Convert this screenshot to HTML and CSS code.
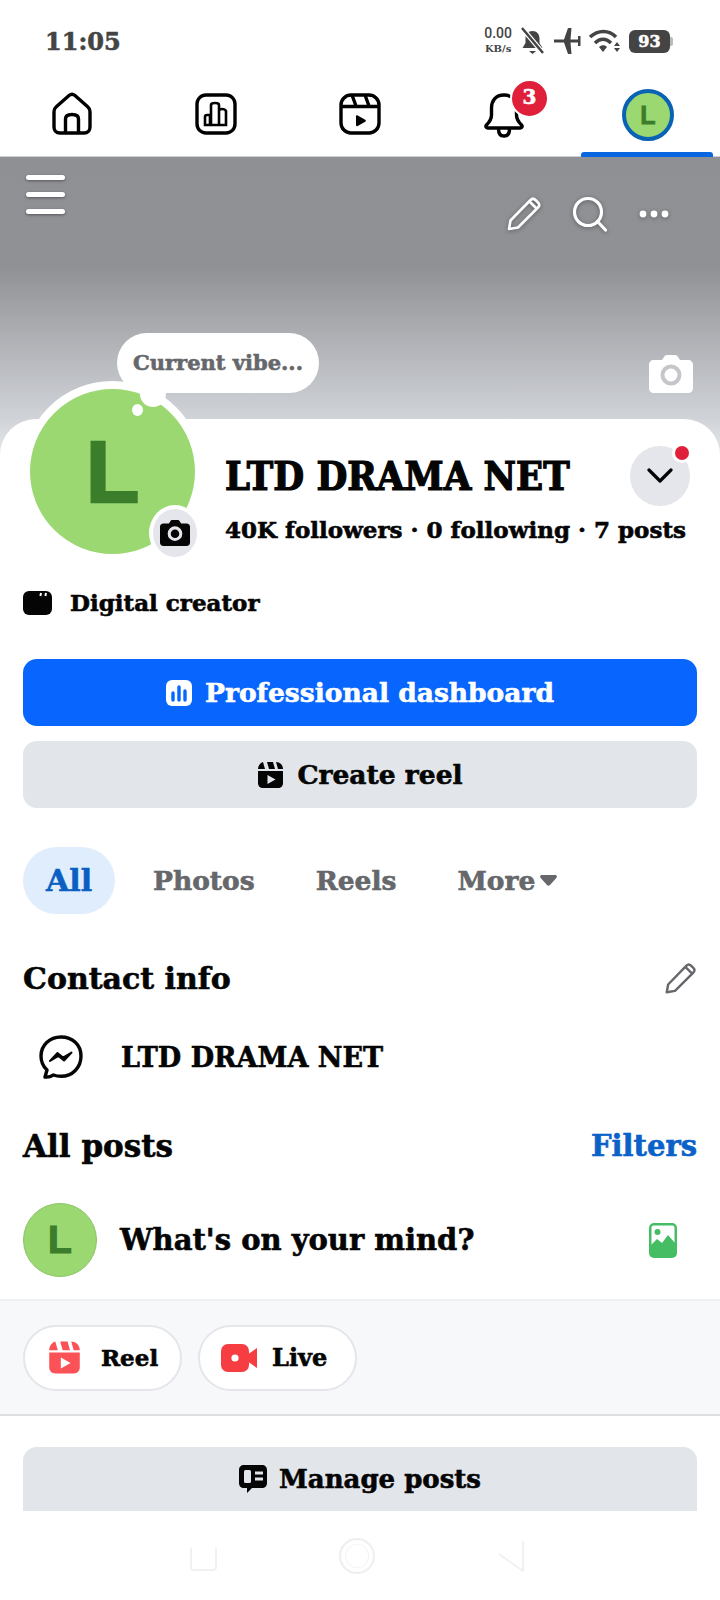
FILE: index.html
```html
<!DOCTYPE html>
<html lang="en">
<head>
    <meta charset="UTF-8">
    <meta name="viewport" content="width=device-width, initial-scale=1.0">
    <title>LTD DRAMA NET</title>
    <link rel="stylesheet" href="styles.css">
</head>
<body>
    <div class="phone">
        <div class="status">
            <span class="time">11:05</span>
            <div class="status-icons">
                <div class="speed"><span>0.00</span><span class="speed-unit">KB/s</span></div>
                <svg width="27" height="28" viewBox="0 0 27 28"><path d="M13.5 4c-4.500 0-7 3.400-7 7.500V16L3.500 21h20l-3-5v-4.500C20.500 7.400 18 4 13.500 4z" fill="#444"/><path d="M10 24h7l-3.500 3z" fill="#444"/><path d="M3 1l21 25" stroke="#fff" stroke-width="5"/><path d="M3 1l21 25" stroke="#444" stroke-width="2.500"/></svg>
                <svg width="28" height="28" viewBox="0 0 28 28"><path d="M1 12.500h10L15 1h3.500l-1 11.500H25V9h2.500v10H25v-3.500h-7.500l1 11.500H15l-4-11.500H1z" fill="#444"/></svg>
                <svg width="33" height="26" viewBox="0 0 33 26"><path d="M2 9c8-7.500 19-7.500 26 0M7 15c5-5 11-5 16 0" fill="none" stroke="#444" stroke-width="3.500"/><path d="M11 19c2.500-2.500 6-2.500 8 0l-4 5z" fill="#444"/><path d="M29 14l3 4h-6zM29 24l3-4h-6z" fill="#444"/></svg>
                <div class="battery"><span>93</span></div>
            </div>
        </div>

        <nav class="tabs">
            <div class="tab">
                <svg width="44" height="44" viewBox="0 0 44 44"><path d="M4 19.500c0-2 .8-3.500 2.300-4.800L19 3.500c1.800-1.500 4.200-1.500 6 0l12.700 11.200c1.500 1.300 2.300 2.800 2.300 4.800V35c0 3.500-2.200 6-6 6H10c-3.800 0-6-2.500-6-6z" fill="none" stroke="#000" stroke-width="3.400"/><path d="M15.500 41V27c0-3 2-4.500 6.500-4.500s6.500 1.500 6.500 4.500v14" fill="none" stroke="#000" stroke-width="3.400"/></svg>
            </div>
            <div class="tab">
                <svg width="44" height="44" viewBox="0 0 44 44"><rect x="3" y="3" width="38" height="38" rx="9" fill="none" stroke="#000" stroke-width="3.400"/><path d="M11 33V25q0-2 2-2t3 0V33zM17 33V13q0-2 4-2t4 2v20zM25 33V19q0-2 3-2t4 2v14zM10 33h23" fill="none" stroke="#000" stroke-width="2.600"/></svg>
            </div>
            <div class="tab">
                <svg width="44" height="44" viewBox="0 0 44 44"><rect x="3" y="3" width="38" height="38" rx="10" fill="none" stroke="#000" stroke-width="3.400"/><path d="M3 14.500h38M14 3l4 11M27 3l4 11" fill="none" stroke="#000" stroke-width="3.400"/><path d="M18 24.500c0-1 .8-1.500 1.700-1l7.500 4.300c.9.500.9 1.500 0 2l-7.500 4.300c-.9.500-1.700 0-1.700-1z" fill="#000"/></svg>
            </div>
            <div class="tab">
                <svg width="44" height="46" viewBox="0 0 44 46"><path d="M22 3c-8.500 0-12.500 6-12.500 13v7c0 4-2 7-5 10-1.200 1.300-.6 3 1.200 3h32.600c1.800 0 2.400-1.700 1.200-3-3-3-5-6-5-10v-7C34.500 9 30.500 3 22 3z" fill="none" stroke="#000" stroke-width="3.400"/><path d="M16.500 37c0 5 2.500 7 5.500 7s5.500-2 5.500-7" fill="none" stroke="#000" stroke-width="3.400"/></svg>
                <span class="badge">3</span>
            </div>
            <div class="tab tab-active">
                <div class="tab-avatar">L</div>
            </div>
        </nav>

        <div class="cover">
            <div class="cover-tools">
                <div class="burger"><span></span><span></span><span></span></div>
                <div class="cover-actions">
                    <svg class="shadow-icon" width="36" height="36" viewBox="0 0 36 36"><path d="M3 33l1.500-8.500L24.500 4c1.500-1.500 3.500-1.500 5 0l2.500 2.500c1.500 1.500 1.500 3.500 0 5L12 31.500zM23.500 5.500l7 7" fill="none" stroke="#fff" stroke-width="2.600" stroke-linejoin="round"/></svg>
                    <svg class="shadow-icon" width="36" height="36" viewBox="0 0 36 36"><circle cx="16" cy="16" r="13.500" fill="none" stroke="#fff" stroke-width="3.200"/><path d="M25.500 25.500l8 8.500" stroke="#fff" stroke-width="3.200" stroke-linecap="round"/></svg>
                    <svg class="shadow-icon" width="32" height="10" viewBox="0 0 32 10"><circle cx="5" cy="5" r="3.400" fill="#fff"/><circle cx="16" cy="5" r="3.400" fill="#fff"/><circle cx="27" cy="5" r="3.400" fill="#fff"/></svg>
                </div>
            </div>
            <svg class="cover-camera" width="44" height="38" viewBox="0 0 44 38"><path d="M5 5h8l2-3c.6-1.200 1.500-2 3-2h8c1.500 0 2.400.8 3 2l2 3h8c3 0 5 2 5 5v23c0 3-2 5-5 5H5c-3 0-5-2-5-5V10c0-3 2-5 5-5z" fill="#fff"/><circle cx="22" cy="20" r="8.500" fill="none" stroke="#c4c6ca" stroke-width="4"/></svg>
            <div class="bubble">Current vibe...</div>
        </div>

        <main class="sheet">
            <div class="avatar-wrap">
                <div class="avatar">L</div>
                <span class="bubble-tail"></span>
                <span class="bubble-dot"></span>
                <div class="avatar-camera">
                    <svg width="30" height="26" viewBox="0 0 44 38"><path d="M5 5h8l2-3c.6-1.200 1.500-2 3-2h8c1.500 0 2.400.8 3 2l2 3h8c3 0 5 2 5 5v23c0 3-2 5-5 5H5c-3 0-5-2-5-5V10c0-3 2-5 5-5z" fill="#050505"/><circle cx="22" cy="20" r="8.500" fill="none" stroke="#e4e6eb" stroke-width="4.500"/></svg>
                </div>
            </div>

            <div class="head">
                <div class="head-top">
                    <h1 class="name">LTD DRAMA NET</h1>
                    <div class="chevron">
                        <svg width="26" height="16" viewBox="0 0 26 16"><path d="M2 2l11 11L24 2" fill="none" stroke="#050505" stroke-width="3.200" stroke-linecap="round" stroke-linejoin="round"/></svg>
                        <span class="chevron-dot"></span>
                    </div>
                </div>
                <div class="stats">40K followers · 0 following · 7 posts</div>
            </div>

            <div class="role">
                <svg width="29" height="24" viewBox="0 0 29 24"><rect width="29" height="24" rx="6" fill="#050505"/><path d="M18 2l-.6 3M23 2l-.6 3" stroke="#fff" stroke-width="2"/></svg>
                <span>Digital creator</span>
            </div>

            <div class="actions">
                <div class="btn btn-primary">
                    <svg width="26" height="26" viewBox="0 0 26 26"><rect width="26" height="26" rx="6" fill="#fff"/><path d="M7 20v-7M13 20V7M19 20v-9" stroke="#0866ff" stroke-width="3.400" stroke-linecap="round"/></svg>
                    <span>Professional dashboard</span>
                </div>
                <div class="btn">
                    <svg width="27" height="26" viewBox="0 0 27 26"><path d="M1 9h25v12c0 3-2 5-5 5H6c-3 0-5-2-5-5z" fill="#050505"/><path d="M1 7c0-3 2-6 5-7l2 7zM10 0h6l2 7h-6zM19 0c4 0 7 3 7 7h-5z" fill="#050505"/><path d="M10.500 13v9l8-4.500z" fill="#e2e5ea"/></svg>
                    <span>Create reel</span>
                </div>
            </div>

            <div class="filters">
                <span class="pill-active">All</span>
                <span class="filter f-photos">Photos</span>
                <span class="filter f-reels">Reels</span>
                <span class="filter f-more">More<svg width="17" height="11" viewBox="0 0 17 11"><path d="M2 0h13c1.800 0 2.500 1.600 1.300 2.900L10 10c-.9 1-2.100 1-3 0L.7 2.900C-.5 1.600.2 0 2 0z" fill="#65676b"/></svg></span>
            </div>

            <div class="section-head contact-head">
                <h2>Contact info</h2>
                <svg width="33" height="33" viewBox="0 0 36 36"><path d="M3 33l1.500-8.500L24.500 4c1.500-1.500 3.500-1.500 5 0l2.500 2.500c1.500 1.500 1.500 3.500 0 5L12 31.500zM23.500 5.500l7 7" fill="none" stroke="#65676b" stroke-width="2.600" stroke-linejoin="round"/></svg>
            </div>

            <div class="contact-row">
                <svg width="44" height="44" viewBox="0 0 44 44"><path d="M22 2C10.500 2 2 10.500 2 21c0 5.500 2.200 10.500 6 14l-2 7c3 .4 6-.5 8.500-2 2.300.9 4.800 1.300 7.500 1.300 11.500 0 20-8.800 20-20.300S33.500 2 22 2z" fill="none" stroke="#050505" stroke-width="3.400" stroke-linejoin="round"/><path d="M11 26l7.500-8 5.500 4.500 8.500-5-7.500 8-5.500-4.500z" fill="#050505" stroke="#050505" stroke-width="2" stroke-linejoin="round"/></svg>
                <span>LTD DRAMA NET</span>
            </div>

            <div class="section-head posts-head">
                <h2 class="posts-title">All posts</h2>
                <span class="link">Filters</span>
            </div>

            <div class="composer">
                <div class="mini-avatar">L</div>
                <span class="composer-text">What's on your mind?</span>
                <svg width="28" height="35" viewBox="0 0 28 35"><rect width="28" height="35" rx="5" fill="#45bd62"/><rect x="2.500" y="2.500" width="23" height="22" rx="2" fill="#fff"/><circle cx="8.500" cy="9" r="3" fill="#45bd62"/><path d="M2 22l6-6 5 4 6-8 7 8v6H2z" fill="#45bd62"/></svg>
            </div>

            <div class="quick">
                <div class="quick-pill">
                    <svg width="33" height="33" viewBox="0 0 27 26"><path d="M1 9h25v12c0 3-2 5-5 5H6c-3 0-5-2-5-5z" fill="#fb5257"/><path d="M1 7c0-3 2-6 5-7l2 7zM10 0h6l2 7h-6zM19 0c4 0 7 3 7 7h-5z" fill="#fb5257"/><path d="M10.500 13v9l8-4.500z" fill="#fff"/></svg>
                    <span>Reel</span>
                </div>
                <div class="quick-pill quick-live">
                    <svg width="36" height="28" viewBox="0 0 36 28"><rect width="28" height="28" rx="7" fill="#f63d42"/><path d="M26 11l10-7v20l-10-7z" fill="#f63d42"/><circle cx="14" cy="14" r="3.600" fill="#fff"/></svg>
                    <span>Live</span>
                </div>
            </div>

            <div class="manage-wrap">
                <div class="btn btn-manage">
                    <svg width="28" height="28" viewBox="0 0 28 28"><path d="M5 0h18c3 0 5 2 5 5v13c0 3-2 5-5 5H13l-5 5v-5H5c-3 0-5-2-5-5V5c0-3 2-5 5-5z" fill="#050505"/><rect x="5" y="5" width="7" height="13" rx="1.500" fill="#e2e5ea"/><path d="M16 8h8M16 14h8" stroke="#e2e5ea" stroke-width="3"/></svg>
                    <span>Manage posts</span>
                </div>
            </div>
        </main>

        <div class="navbar">
            <span class="nav-square"></span>
            <span class="nav-circle"></span>
            <svg width="28" height="32" viewBox="0 0 28 32"><path d="M26 1v30L2 14" fill="none" stroke="#f1f1f2" stroke-width="2"/></svg>
        </div>
    </div>
</body>
</html>
```

FILE: styles.css
```css
* {
    margin: 0;
    padding: 0;
    box-sizing: border-box;
}

body {
    font-family: "DejaVu Serif", "Liberation Serif", serif;
    font-weight: 700;
    -webkit-text-stroke: 0.6px currentColor;
    background-color: #fff;
    color: #050505;
}

svg {
    display: block;
    flex-shrink: 0;
}

.phone {
    position: relative;
    width: 720px;
    height: 1600px;
    overflow: hidden;
    display: flex;
    flex-direction: column;
}

/* status bar */
.status {
    height: 68px;
    padding: 14px 50px 0 45px;
    display: flex;
    justify-content: space-between;
    align-items: center;
    color: #444;
}

.time {
    font-size: 24px;
}

.status-icons {
    display: flex;
    align-items: center;
    gap: 7px;
}

.speed {
    display: flex;
    flex-direction: column;
    align-items: center;
    font-family: "Roboto", sans-serif;
    font-size: 14px;
    font-weight: 500;
    line-height: 15px;
    -webkit-text-stroke: 0;
}

.speed-unit {
    font-family: "DejaVu Serif", serif;
    font-size: 10px;
    font-weight: 700;
}

.battery {
    position: relative;
    width: 41px;
    height: 23px;
    margin-left: 1px;
    background-color: #444;
    border-radius: 6px;
    color: #fff;
    font-size: 16px;
    line-height: 23px;
    text-align: center;
}

.battery::after {
    content: "";
    position: absolute;
    right: -3px;
    top: 7px;
    width: 3px;
    height: 9px;
    border-radius: 0 2px 2px 0;
    background-color: #bbb;
}

/* top tabs */
.tabs {
    height: 89px;
    padding-bottom: 1px;
    display: flex;
    border-bottom: 1px solid #cfd0d3;
}

.tab {
    position: relative;
    flex: 1;
    display: flex;
    justify-content: center;
    padding-top: 24px;
}

.tab-active::after {
    content: "";
    position: absolute;
    left: 5px;
    right: 7px;
    bottom: -2px;
    height: 5px;
    background-color: #0866e0;
    border-radius: 3px 3px 0 0;
}

.badge {
    position: absolute;
    left: 78px;
    top: 11px;
    width: 39px;
    height: 39px;
    border-radius: 50%;
    border: 2px solid #fff;
    background-color: #e0203a;
    color: #fff;
    font-size: 20px;
    line-height: 33px;
    text-align: center;
}

.tab-avatar {
    width: 52px;
    height: 52px;
    margin-top: -3px;
    border-radius: 50%;
    border: 4px solid #0a62b4;
    background-color: #9bd872;
    color: #3b7d2a;
    font-family: "Liberation Sans", sans-serif;
    font-size: 25px;
    line-height: 44px;
    text-align: center;
    -webkit-text-stroke: 0.8px #3b7d2a;
}

/* cover */
.cover {
    position: relative;
    height: 300px;
    flex-shrink: 0;
    background: linear-gradient(#8f9094 0, #909195 110px, #d0d3d8 262px, #e6e8eb 300px);
}

.cover-tools {
    display: flex;
    justify-content: space-between;
    padding: 18px 50px 0 26px;
}

.burger {
    display: flex;
    flex-direction: column;
    gap: 12px;
}

.burger span {
    display: block;
    width: 39px;
    height: 5px;
    border-radius: 3px;
    background-color: #fff;
    box-shadow: 0 1px 3px rgba(0, 0, 0, 0.4);
}

.cover-actions {
    display: flex;
    align-items: center;
    gap: 30px;
    margin-top: 21px;
}

.shadow-icon {
    filter: drop-shadow(0 1px 2px rgba(0, 0, 0, 0.35));
}

.cover-camera {
    position: absolute;
    left: 649px;
    top: 198px;
}

.bubble {
    position: absolute;
    left: 117px;
    top: 176px;
    width: 202px;
    height: 60px;
    border-radius: 30px;
    background-color: #fff;
    color: #65676b;
    font-size: 21px;
    line-height: 60px;
    text-align: center;
    z-index: 3;
}

/* profile sheet */
.sheet {
    position: relative;
    flex: 1;
    margin-top: -38px;
    background-color: #fff;
    border-radius: 36px 36px 0 0;
}

.avatar-wrap {
    position: absolute;
    left: 22px;
    top: -38px;
    width: 181px;
    height: 181px;
}

.avatar {
    width: 181px;
    height: 181px;
    border-radius: 50%;
    border: 8px solid #fff;
    background-color: #9bd872;
    color: #3b7d2a;
    font-family: "Liberation Sans", sans-serif;
    font-size: 87px;
    line-height: 165px;
    text-align: center;
    -webkit-text-stroke: 2.5px #3b7d2a;
}

.bubble-tail {
    position: absolute;
    left: 118px;
    top: 0;
    width: 26px;
    height: 26px;
    border-radius: 50%;
    background-color: #fff;
    z-index: 4;
}

.bubble-dot {
    position: absolute;
    left: 110px;
    top: 23px;
    width: 11px;
    height: 12px;
    border-radius: 50%;
    background-color: #fff;
}

.avatar-camera {
    position: absolute;
    left: 127px;
    top: 124px;
    width: 52px;
    height: 56px;
    border-radius: 50%;
    border: 4px solid #fff;
    background-color: #e4e6eb;
    display: flex;
    justify-content: center;
    align-items: center;
}

.head {
    padding: 27px 30px 0 225px;
}

.head-top {
    display: flex;
    justify-content: space-between;
    align-items: center;
}

.name {
    font-size: 39.5px;
    font-stretch: condensed;
    line-height: 60px;
    font-weight: 700;
    white-space: nowrap;
    -webkit-text-stroke: 1.2px #050505;
}

.chevron {
    position: relative;
    width: 60px;
    height: 60px;
    border-radius: 50%;
    background-color: #e4e6eb;
    display: flex;
    justify-content: center;
    align-items: center;
}

.chevron-dot {
    position: absolute;
    right: -2px;
    top: -3px;
    width: 20px;
    height: 20px;
    border-radius: 50%;
    border: 3px solid #fff;
    background-color: #e0203a;
}

.stats {
    margin-top: 10px;
    margin-right: -20px;
    font-size: 23px;
    line-height: 28px;
    white-space: nowrap;
}

.role {
    margin-top: 45px;
    padding-left: 23px;
    display: flex;
    align-items: center;
    gap: 18px;
    font-size: 23px;
    line-height: 28px;
}

.actions {
    margin-top: 42px;
    padding: 0 23px;
    display: flex;
    flex-direction: column;
    gap: 15px;
}

.btn {
    height: 67px;
    border-radius: 14px;
    background-color: #e2e5ea;
    display: flex;
    justify-content: center;
    align-items: center;
    gap: 13px;
    font-size: 26.5px;
}

.btn-primary {
    background-color: #0866ff;
    color: #fff;
}

.filters {
    margin-top: 39px;
    padding-left: 23px;
    height: 67px;
    display: flex;
    align-items: center;
    font-size: 26.5px;
    color: #65676b;
}

.pill-active {
    width: 92px;
    height: 67px;
    border-radius: 34px;
    background-color: #dfedfd;
    color: #0a5fc2;
    font-size: 30px;
    line-height: 67px;
    text-align: center;
}

.filter {
    display: flex;
    align-items: center;
    gap: 5px;
}

.f-photos {
    margin-left: 38px;
}

.f-reels {
    margin-left: 61px;
}

.f-more {
    margin-left: 61px;
}

.section-head {
    padding: 0 23px;
    display: flex;
    justify-content: space-between;
    align-items: center;
}

.section-head h2 {
    font-size: 30px;
    font-weight: 700;
}

.section-head .posts-title {
    font-size: 31px;
}

.contact-head {
    margin-top: 44px;
    height: 40px;
}

.contact-row {
    margin-top: 37px;
    padding-left: 39px;
    display: flex;
    align-items: center;
    gap: 38px;
    font-size: 27px;
    height: 44px;
}

.posts-head {
    margin-top: 47px;
    height: 40px;
}

.link {
    color: #0a62c8;
    font-size: 29px;
}

.composer {
    margin-top: 37px;
    height: 98px;
    padding: 0 43px 22px 23px;
    display: flex;
    align-items: center;
    border-bottom: 2px solid #eeeff1;
}

.mini-avatar {
    width: 74px;
    height: 74px;
    border-radius: 50%;
    border: 1px solid #8cc466;
    background-color: #9bd872;
    color: #3b7d2a;
    font-family: "Liberation Sans", sans-serif;
    font-size: 39px;
    line-height: 72px;
    text-align: center;
    -webkit-text-stroke: 1.2px #3b7d2a;
}

.composer-text {
    flex: 1;
    margin-left: 23px;
    font-size: 29px;
}

.quick {
    height: 115px;
    padding-left: 23px;
    display: flex;
    align-items: center;
    gap: 16px;
    background-color: #f7f8fa;
    border-bottom: 2px solid #dddfe2;
}

.quick-pill {
    width: 159px;
    height: 66px;
    padding-left: 23px;
    border-radius: 33px;
    border: 2px solid #e4e6eb;
    background-color: #fff;
    display: flex;
    align-items: center;
    gap: 20px;
    font-size: 23px;
}

.quick-live {
    padding-left: 21px;
    gap: 15px;
    font-size: 24px;
}

.manage-wrap {
    margin-top: 31px;
    padding: 0 23px;
    height: 64px;
    overflow: hidden;
}

.btn-manage {
    height: 78px;
    gap: 12px;
    padding-bottom: 14px;
    font-size: 26px;
}

/* phone nav bar, drawn over the page */
.navbar {
    position: absolute;
    top: 1538px;
    left: 0;
    width: 720px;
    display: flex;
    align-items: center;
    padding-left: 190px;
}

.nav-square {
    width: 27px;
    height: 25px;
    margin-top: 5px;
    border: 2px solid #f1f1f2;
    border-top-color: transparent;
    border-radius: 4px;
}

.nav-circle {
    width: 36px;
    height: 36px;
    margin-left: 122px;
    border-radius: 50%;
    border: 2px solid #efeff0;
    box-shadow: inset 0 0 0 4px #fff, inset 0 0 0 5px #f4f4f5;
}

.navbar svg {
    margin-left: 122px;
}
```
